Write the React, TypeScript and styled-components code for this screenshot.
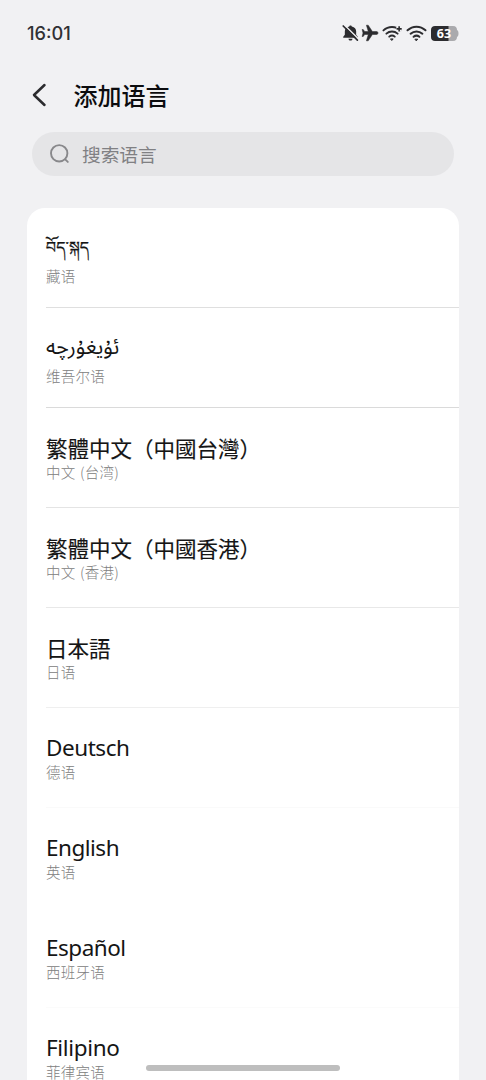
import React from "react";
import styled, { createGlobalStyle } from "styled-components";

const Global = createGlobalStyle`
  html, body { margin: 0; background: #f1f1f3; }
  * { box-sizing: border-box; }
`;

const Screen = styled.main`
  position: relative;
  width: 486px;
  height: 1080px;
  overflow: hidden;
  background: #f1f1f3;
  color: #151515;
  font-family: "Noto Sans", "Noto Sans CJK SC", sans-serif;
`;

const StatusBar = styled.div`
  display: flex;
  justify-content: space-between;
  align-items: center;
  height: 66px;
  padding: 0 27px;
`;

const Clock = styled.span`
  font: 500 18.2px/24px Inter, sans-serif;
  color: #303033;
`;

const StatusIcons = styled.div`
  display: flex;
  align-items: center;
  color: #2c2c2f;
  svg { display: block; }
`;

const PlaneIcon = styled.svg`
  margin-left: 2px;
`;

const SignalIcon = styled.svg<{ $gap?: number }>`
  margin-left: ${(p) => p.$gap ?? 4}px;
`;

const Header = styled.header`
  display: flex;
  align-items: center;
  height: 58px;
  padding-left: 31px;
`;

const Title = styled.h1`
  margin: 0 0 0 25.5px;
  font: 500 24px/36px "Noto Sans CJK SC", sans-serif;
  color: #0c0c0e;
`;

const SearchBox = styled.div`
  display: flex;
  align-items: center;
  gap: 11px;
  width: 422px;
  height: 44px;
  margin: 8px 0 0 32px;
  padding-left: 17px;
  border-radius: 22px;
  background: #e5e5e7;
  font: 400 18.7px/28px "Noto Sans CJK SC", sans-serif;
  color: #808083;
`;

const Card = styled.ul`
  list-style: none;
  width: 432px;
  margin: 32px 0 0 27px;
  padding: 0 0 0 19px;
  border-radius: 18px 18px 0 0;
  background: #fff;
`;

const Row = styled.li<{ $line: string }>`
  display: flex;
  flex-direction: column;
  height: 100px;
  padding-top: 24px;
  border-bottom: 1px solid ${(p) => p.$line};
`;

const Name = styled.span<{ $family: string; $size: number; $tall?: boolean; $stroke?: number; $lead?: number; $track?: number }>`
  height: ${(p) => (p.$tall ? 34 : 30)}px;
  font-family: ${(p) => p.$family};
  font-size: ${(p) => p.$size}px;
  line-height: ${(p) => p.$lead ?? 32}px;
  letter-spacing: ${(p) => (p.$track ? `${p.$track}px` : "normal")};
  white-space: nowrap;
  -webkit-text-stroke: ${(p) => p.$stroke ?? 0}px currentColor;
`;

const Sub = styled.span`
  font: 300 14.5px/20px "Noto Sans CJK SC", sans-serif;
  letter-spacing: 0.25px;
  word-spacing: 1px;
  color: #808080;
`;

const HomeBar = styled.div`
  position: absolute;
  left: 146px;
  top: 1065px;
  width: 194px;
  height: 6px;
  border-radius: 3px;
  background: #bebebe;
`;

const CJK = '"Noto Sans CJK SC", sans-serif';
const LATIN = '"Noto Sans", sans-serif';

const languages = [
  { name: "བོད་སྐད", sub: "藏语", family: '"Noto Sans Tibetan", "Noto Serif Tibetan", serif', size: 16, lead: 42, stroke: 0.2, tall: true, line: "#dfdfdf" },
  { name: "ئۇيغۇرچە", sub: "维吾尔语", family: '"Noto Sans Arabic", "DejaVu Sans", sans-serif', size: 21.3, lead: 32, tall: true, line: "#dadada" },
  { name: "繁體中文（中國台灣）", sub: "中文 (台湾)", family: CJK, size: 21.5, stroke: 0.15, line: "#e4e4e4" },
  { name: "繁體中文（中國香港）", sub: "中文 (香港)", family: CJK, size: 21.5, stroke: 0.15, line: "#e8e8e8" },
  { name: "日本語", sub: "日语", family: '"Noto Sans CJK JP", sans-serif', size: 21.5, stroke: 0.15, line: "#efefef" },
  { name: "Deutsch", sub: "德语", family: LATIN, size: 22.5, track: -0.45, line: "#fafafa" },
  { name: "English", sub: "英语", family: LATIN, size: 22.5, track: -0.5, line: "#ffffff" },
  { name: "Español", sub: "西班牙语", family: LATIN, size: 22.5, track: -0.5, line: "#fbfbfb" },
  { name: "Filipino", sub: "菲律宾语", family: LATIN, size: 22.5, track: -0.35, line: "#ffffff" },
];

const WifiArcs = () => (
  <g fill="none" stroke="currentColor" strokeWidth="2" strokeLinecap="round">
    <path d="M1.5 6.3C6.7 1.4 14.3 1.4 19.5 6.3" />
    <path d="M4.6 9.7c3.4-3.1 8.4-3.1 11.8 0" />
    <path d="M7.6 12.8c1.7-1.4 4.1-1.4 5.8 0" />
    <path d="M9.3 15.2h2.4l-1.2 1.4z" fill="currentColor" strokeWidth="1" strokeLinejoin="round" />
  </g>
);

export default function App() {
  return (
    <Screen>
      <Global />
      <StatusBar>
        <Clock>16:01</Clock>
        <StatusIcons>
          <svg width="17" height="18" viewBox="0 0 18 18">
            <path fill="currentColor" d="M9 1c-.8 0-1.3.5-1.4 1.1C4.600 2.700 3 4.700 3 7.200v3.600L1.300 13v1h15.400v-1L15 10.800V7.200c0-2.500-1.600-4.500-4.600-5.100C10.300 1.500 9.800 1 9 1zM6.800 15h4.400c-.2 1.300-1.100 2-2.200 2s-2-.7-2.200-2z" />
            <path d="M2.500.6L17.300 15.100" stroke="#f1f1f3" strokeWidth="1.600" />
            <path d="M1.300 1.600L16.300 16.600" stroke="currentColor" strokeWidth="1.800" strokeLinecap="round" />
          </svg>
          <PlaneIcon width="18" height="18" viewBox="0 0 18 18">
            <path fill="currentColor" stroke="currentColor" strokeWidth=".5" strokeLinejoin="round" d="M17 9c0-.9-.7-1.500-1.500-1.500h-4.100L7.200 1.200H5.400l1.900 6.300H3.700L2.200 5.500H1.100L2 9l-.9 3.500h1.100l1.500-2h3.600l-1.900 6.300h1.800l4.200-6.300h4.100c.8 0 1.500-.6 1.500-1.500z" />
          </PlaneIcon>
          <SignalIcon $gap={3} width="20" height="18" viewBox="0 0 21 18">
            <WifiArcs />
            <path d="M15 4.700h6M18 1.700v6" stroke="#f1f1f3" strokeWidth="4" />
            <path d="M15.300 4.700h5.400M18 2v5.400" stroke="currentColor" strokeWidth="1.700" />
          </SignalIcon>
          <SignalIcon width="21" height="18" viewBox="0 0 21 18">
            <WifiArcs />
          </SignalIcon>
          <SignalIcon width="28" height="17" viewBox="0 0 28 17">
            <path fill="#aaaaad" d="M17 1h5c3 0 4 2 4 4 2 .5 2 6.500 0 7 0 2-1 4-4 4h-5z" />
            <path fill="currentColor" d="M4 1h13.500v15H4c-2.500 0-4-1.500-4-4V5c0-2.500 1.500-4 4-4z" />
            <text x="13" y="13" textAnchor="middle" fontFamily="Open Sans, sans-serif" fontWeight="700" fontSize="12.500" fill="#fff">63</text>
          </SignalIcon>
        </StatusIcons>
      </StatusBar>
      <Header>
        <svg width="17" height="24" viewBox="0 0 17 24" fill="none" stroke="#2b2b2e" strokeWidth="2.500" strokeLinecap="round" strokeLinejoin="round">
          <path d="M13.500 2L3 12l10.500 10" />
        </svg>
        <Title>添加语言</Title>
      </Header>
      <SearchBox>
        <svg width="22" height="22" viewBox="0 0 22 22" fill="none" stroke="#88888b" strokeWidth="1.900" strokeLinecap="round">
          <circle cx="10.200" cy="10.300" r="8.200" />
          <path d="M16.200 16.400l2.600 2.500" />
        </svg>
        搜索语言
      </SearchBox>
      <Card>
        {languages.map((l) => (
          <Row key={l.name} $line={l.line}>
            <Name $family={l.family} $size={l.size} $tall={l.tall} $stroke={l.stroke} $lead={l.lead} $track={l.track}>
              <bdi>{l.name}</bdi>
            </Name>
            <Sub>{l.sub}</Sub>
          </Row>
        ))}
      </Card>
      <HomeBar />
    </Screen>
  );
}
